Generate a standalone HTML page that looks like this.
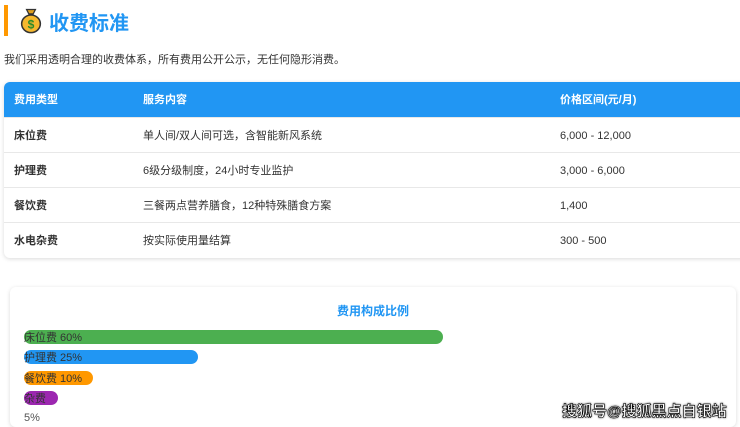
<!DOCTYPE html>
<html><head><meta charset="utf-8"><style>
*{margin:0;padding:0;box-sizing:border-box}
body{width:740px;height:426px;overflow:hidden;background:#fff;font-family:"Liberation Sans","Noto Sans CJK SC",sans-serif;position:relative;color:#333}
.h{position:absolute;left:4px;top:5px;height:31px;border-left:4px solid #ff9800}
.h span{position:absolute;left:41px;top:2px;font-size:20px;font-weight:bold;color:#2196f3;white-space:nowrap}
.bag{position:absolute;left:12px;top:2px}
.intro{position:absolute;left:4px;top:51px;font-size:11px;color:#333}
.tbl{position:absolute;left:4px;top:82px;width:745px;border-radius:6px;overflow:hidden;box-shadow:0 1px 4px rgba(0,0,0,.15)}
.row{height:35px;font-size:11px;border-bottom:1px solid #e8e8e8;position:relative}
.row div{position:absolute;top:11px;line-height:14px}
.c1{left:10px;font-weight:bold}.c2{left:139px}.c3{left:556px}
.hd{background:#2196f3;color:#fff;height:36px;font-weight:bold}
.hd div{font-weight:bold}
.card{position:absolute;left:10px;top:287px;width:726px;height:140px;border-radius:6px;box-shadow:0 1px 4px rgba(0,0,0,.15)}
.ct{position:absolute;left:0;width:726px;top:15px;text-align:center;font-size:12px;font-weight:bold;color:#2196f3}
.bar{position:absolute;left:14px;height:14px;border-radius:7px;font-size:11px;line-height:16px;color:#333;white-space:nowrap}
.wm{position:absolute;left:562px;top:400px;font-size:15px;font-weight:bold;color:#fff;-webkit-text-stroke:0.6px #000;text-shadow:0 0 2px #000;white-space:nowrap}
</style></head><body>
<div class="h"><svg class="bag" width="22" height="27" viewBox="0 0 20 24"><path d="M6 2h8l-2 4h-4z" fill="#e0a020" stroke="#333" stroke-width="1.2"/><ellipse cx="10" cy="15" rx="8.5" ry="8" fill="#f5b82e" stroke="#333" stroke-width="1.4"/><text x="10" y="19.5" font-size="11" font-weight="bold" text-anchor="middle" fill="#2a8a2a" font-family="Liberation Sans">$</text></svg><span>收费标准</span></div>
<div class="intro">我们采用透明合理的收费体系，所有费用公开公示，无任何隐形消费。</div>
<div class="tbl">
<div class="row hd"><div class="c1">费用类型</div><div class="c2">服务内容</div><div class="c3">价格区间(元/月)</div></div>
<div class="row"><div class="c1">床位费</div><div class="c2">单人间/双人间可选，含智能新风系统</div><div class="c3">6,000 - 12,000</div></div>
<div class="row"><div class="c1">护理费</div><div class="c2">6级分级制度，24小时专业监护</div><div class="c3">3,000 - 6,000</div></div>
<div class="row"><div class="c1">餐饮费</div><div class="c2">三餐两点营养膳食，12种特殊膳食方案</div><div class="c3">1,400</div></div>
<div class="row" style="border:none"><div class="c1">水电杂费</div><div class="c2">按实际使用量结算</div><div class="c3">300 - 500</div></div>
</div>
<div class="card">
<div class="ct">费用构成比例</div>
<div class="bar" style="top:43px;width:419px;background:#4caf50">床位费 60%</div>
<div class="bar" style="top:63px;width:174px;background:#2196f3">护理费 25%</div>
<div class="bar" style="top:84px;width:69px;background:#ff9800">餐饮费 10%</div>
<div class="bar" style="top:104px;width:34px;background:#9c27b0">杂费</div>
<div style="position:absolute;left:14px;top:125px;font-size:11px;color:#555">5%</div>
</div>
<div class="wm">搜狐号@搜狐黑点自银站</div>
</body></html>
